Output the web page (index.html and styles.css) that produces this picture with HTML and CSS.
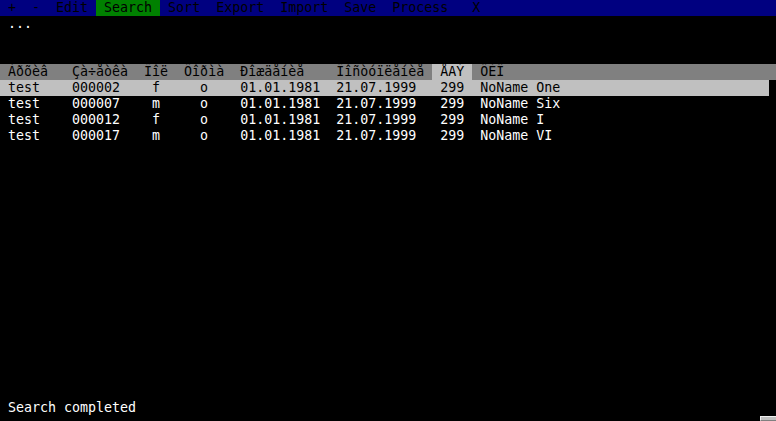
FILE: index.html
```html
<!DOCTYPE html>
<html>
<head>
<meta charset="utf-8">
<link rel="stylesheet" href="styles.css">
</head>
<body>
<div class="screen">
  <div class="menubar">
    <span class="mi">+</span>
    <span class="mi">-</span>
    <span class="mi">Edit</span>
    <span class="mi active">Search</span>
    <span class="mi">Sort</span>
    <span class="mi">Export</span>
    <span class="mi">Import</span>
    <span class="mi">Save</span>
    <span class="mi">Process</span>
    <span class="mi mx">X</span>
  </div>
  <div class="line pad">...</div>
  <div class="blank"></div>
  <div class="table">
    <div class="row head">
      <span class="c first">Àðõèâ</span>
      <span class="c">Çà÷åòêà</span>
      <span class="c">Ïîë</span>
      <span class="c">Ôîðìà</span>
      <span class="c">Ðîæäåíèå</span>
      <span class="c">Ïîñòóïëåíèå</span>
      <span class="c ege sortcol">ÅÃÝ</span>
      <span class="c fio">ÔÈÎ</span>
    </div>
    <div class="row sel">
      <span class="c first">test</span>
      <span class="c">000002</span>
      <span class="c p1">f</span>
      <span class="c p2">o</span>
      <span class="c">01.01.1981</span>
      <span class="c">21.07.1999</span>
      <span class="c ege">299</span>
      <span class="c fio">NoName One</span>
    </div>
    <div class="row">
      <span class="c first">test</span>
      <span class="c">000007</span>
      <span class="c p1">m</span>
      <span class="c p2">o</span>
      <span class="c">01.01.1981</span>
      <span class="c">21.07.1999</span>
      <span class="c ege">299</span>
      <span class="c fio">NoName Six</span>
    </div>
    <div class="row">
      <span class="c first">test</span>
      <span class="c">000012</span>
      <span class="c p1">f</span>
      <span class="c p2">o</span>
      <span class="c">01.01.1981</span>
      <span class="c">21.07.1999</span>
      <span class="c ege">299</span>
      <span class="c fio">NoName I</span>
    </div>
    <div class="row">
      <span class="c first">test</span>
      <span class="c">000017</span>
      <span class="c p1">m</span>
      <span class="c p2">o</span>
      <span class="c">01.01.1981</span>
      <span class="c">21.07.1999</span>
      <span class="c ege">299</span>
      <span class="c fio">NoName VI</span>
    </div>
  </div>
  <div class="fill"></div>
  <div class="line pad">Search completed</div>
  <div class="foot"><span class="grip"></span></div>
</div>
</body>
</html>
```
FILE: styles.css
```css
html, body {
  margin: 0;
  padding: 0;
  background: #000;
}
.screen {
  width: 776px;
  height: 421px;
  display: flex;
  flex-direction: column;
  font-family: "DejaVu Sans Mono", "Liberation Mono", monospace;
  font-size: 13.3px;
  line-height: 16px;
  color: #fff;
  overflow: hidden;
  white-space: pre;
}
.menubar {
  display: flex;
  height: 16px;
  background: #000080;
  color: #000;
}
.mi {
  padding: 0 1ch;
}
.mi.active {
  background: #008000;
}
.mi.mx {
  margin-left: 1ch;
}
.line {
  height: 16px;
}
.pad {
  padding-left: 1ch;
}
.blank {
  height: 32px;
}
.table {
  display: flex;
  flex-direction: column;
}
.row {
  display: grid;
  grid-template-columns: 9ch 9ch 5ch 7ch 12ch 12ch 5ch 1fr;
  height: 16px;
  width: 96ch;
}
.row.head {
  width: auto;
  background: #808080;
  color: #000;
}
.row.sel {
  background: #c0c0c0;
  color: #000;
}
.c.first {
  padding-left: 1ch;
}
.c.p1 {
  padding-left: 1ch;
}
.c.p2 {
  padding-left: 2ch;
}
.c.ege {
  padding-left: 1ch;
}
.c.fio {
  padding-left: 1ch;
}
.c.sortcol {
  background: #c0c0c0;
}
.fill {
  flex: 1;
}
.foot {
  height: 5px;
  display: flex;
  justify-content: flex-end;
}
.grip {
  width: 16px;
  height: 5px;
  box-sizing: border-box;
  background: #c0c0c0;
  border-top: 1px solid #f0f0f0;
  border-left: 1px solid #f0f0f0;
  border-bottom: 1px solid #808080;
}
```
